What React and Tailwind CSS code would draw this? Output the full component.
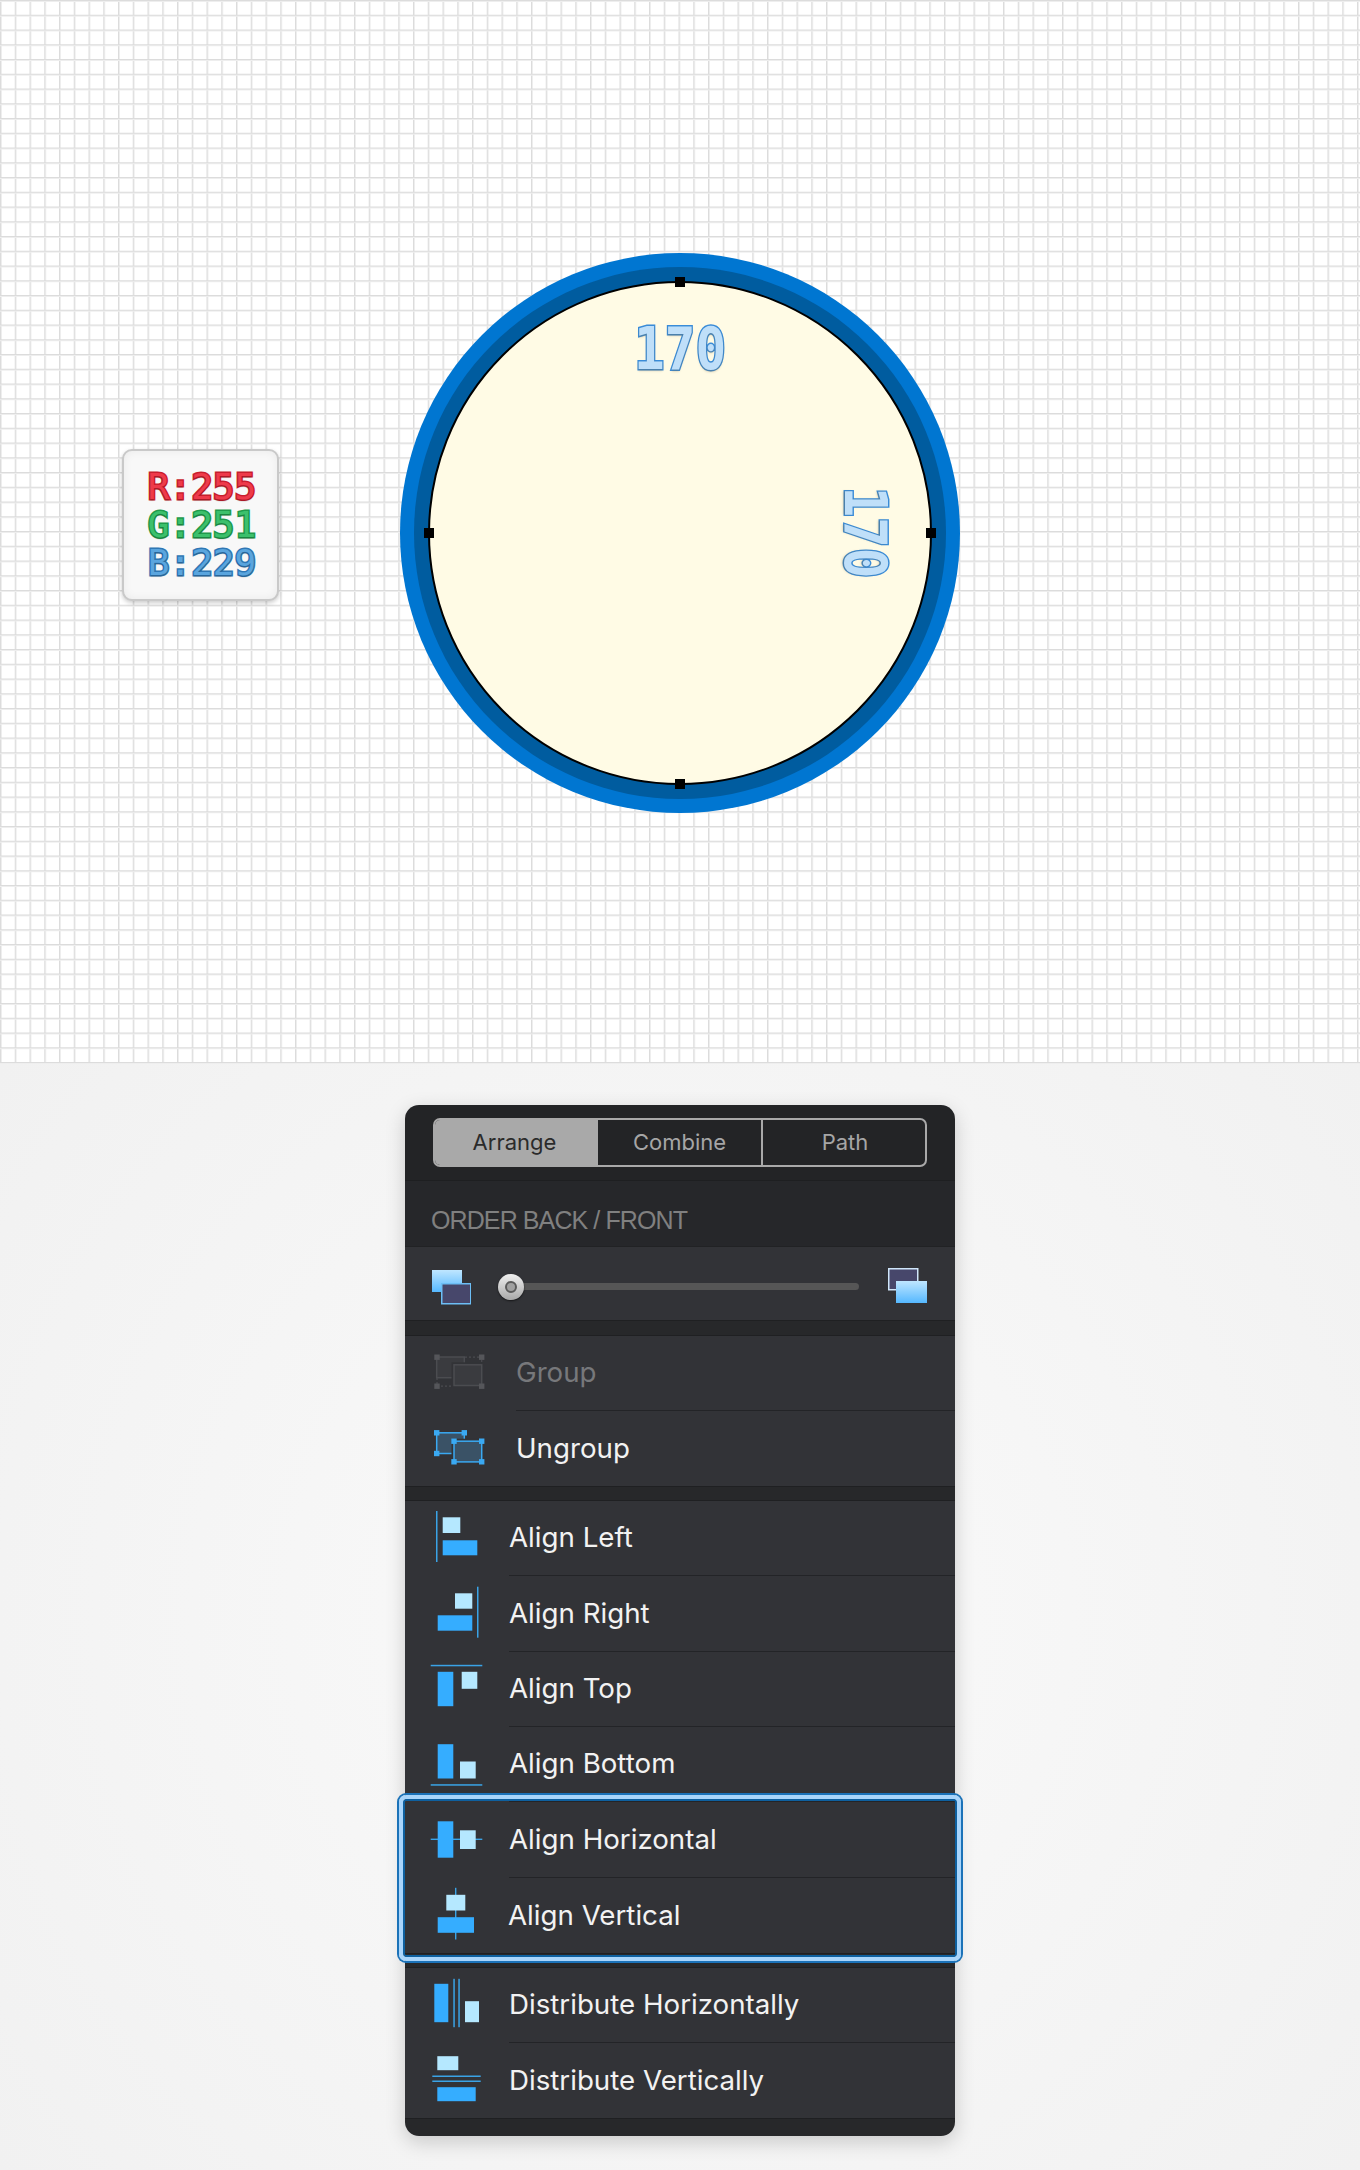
const BLUE = '#35adff';
const LIGHT = '#b5e8ff';
const LINE = '#3aa3e6';

function Icon({ children }) {
    return (
        <svg width="60" height="60" viewBox="0 0 60 60" className="shrink-0 ml-[24px]">
            {children}
        </svg>
    );
}

function Box({ x1, y1, x2, y2, fill }) {
    return <rect x={x1} y={y1} width={x2 - x1} height={y2 - y1} fill={fill} />;
}

function GroupShape({ stroke, fill, handle, dotted }) {
    const squares = dotted
        ? [[8, 13.2], [52.7, 13.2], [8, 42.2], [52.7, 42.2]]
        : [[7.7, 13.8], [35.3, 13.8], [7.7, 34.5], [25, 22.2], [52.7, 22.2], [25, 42.8], [52.7, 42.8]];
    const top = dotted ? 13 : 13.8;
    const lower = dotted ? 20.8 : 22.2;
    return (
        <Icon>
            {dotted && (
                <path d="M36 13.2H50M52.7 16V40M12 42.2H50M8 34V40" stroke={stroke} strokeWidth="1.2" strokeDasharray="2 2" fill="none" />
            )}
            <rect x="7.7" y={top} width="27.6" height="20.7" fill={fill} stroke={stroke} strokeWidth="1.5" />
            <rect x="25" y={lower} width="27.7" height="20.7" fill="none" stroke="#323337" strokeWidth="5" />
            <rect x="25" y={lower} width="27.7" height="20.7" fill={fill} stroke={stroke} strokeWidth="1.5" />
            {squares.map(([x, y]) => (
                <rect key={`${x}-${y}`} x={x - 2.7} y={y - 2.7} width="5.4" height="5.4" fill={handle} />
            ))}
        </Icon>
    );
}

const groupRows = [
    { label: 'Group', muted: true, icon: <GroupShape stroke="#4b4c50" fill="#3a3b3f" handle="#55565a" dotted /> },
    { label: 'Ungroup', icon: <GroupShape stroke="#3aa9f2" fill="#3a5266" handle="#3aa9f2" /> },
];

const alignRows = [
    {
        label: 'Align Left',
        icon: (
            <Icon>
                <Box x1={7} y1={2} x2={8.5} y2={53} fill={LINE} />
                <Box x1={13.7} y1={8.3} x2={31.3} y2={24} fill={LIGHT} />
                <Box x1={13.7} y1={31.3} x2={48.3} y2={46.3} fill={BLUE} />
            </Icon>
        ),
    },
    {
        label: 'Align Right',
        icon: (
            <Icon>
                <Box x1={26} y1={9.3} x2={43.3} y2={24.7} fill={LIGHT} />
                <Box x1={8.7} y1={31.3} x2={43.3} y2={46.7} fill={BLUE} />
                <Box x1={48} y1={2.7} x2={49.5} y2={53.7} fill={LINE} />
            </Icon>
        ),
    },
    {
        label: 'Align Top',
        icon: (
            <Icon>
                <Box x1={1.7} y1={5.8} x2={53.3} y2={7.3} fill={LINE} />
                <Box x1={8.7} y1={12.8} x2={24.3} y2={47.2} fill={BLUE} />
                <Box x1={32.7} y1={12.8} x2={48.3} y2={29.8} fill={LIGHT} />
            </Icon>
        ),
    },
    {
        label: 'Align Bottom',
        icon: (
            <Icon>
                <Box x1={8.7} y1={9.2} x2={24.3} y2={43.5} fill={BLUE} />
                <Box x1={31} y1={26.5} x2={46.7} y2={43.5} fill={LIGHT} />
                <Box x1={1.7} y1={49.2} x2={53.3} y2={50.7} fill={LINE} />
            </Icon>
        ),
    },
];

const centerRows = [
    {
        label: 'Align Horizontal',
        icon: (
            <Icon>
                <Box x1={1.7} y1={28.6} x2={53.3} y2={30} fill={LINE} />
                <Box x1={8.7} y1={11.3} x2={24.3} y2={47.7} fill={BLUE} />
                <Box x1={31} y1={20.3} x2={46.7} y2={39} fill={LIGHT} />
            </Icon>
        ),
    },
    {
        label: 'Align Vertical',
        indent: 'ml-[19px]',
        icon: (
            <Icon>
                <Box x1={26} y1={2.8} x2={27.4} y2={54.5} fill={LINE} />
                <Box x1={17.3} y1={9.8} x2={36.3} y2={25.5} fill={LIGHT} />
                <Box x1={8.7} y1={32.2} x2={45} y2={47.8} fill={BLUE} />
            </Icon>
        ),
    },
];

const distributeRows = [
    {
        label: 'Distribute Horizontally',
        icon: (
            <Icon>
                <Box x1={5.3} y1={8.8} x2={19.3} y2={47.2} fill={BLUE} />
                <Box x1={24.3} y1={3.8} x2={25.8} y2={52.2} fill={LINE} />
                <Box x1={29.3} y1={3.8} x2={30.8} y2={52.2} fill={LINE} />
                <Box x1={36} y1={26.2} x2={50} y2={47.2} fill={LIGHT} />
            </Icon>
        ),
    },
    {
        label: 'Distribute Vertically',
        icon: (
            <Icon>
                <Box x1={8.3} y1={6.2} x2={29.3} y2={20.2} fill={LIGHT} />
                <Box x1={3.3} y1={25.5} x2={51.7} y2={27} fill={LINE} />
                <Box x1={3.3} y1={30.5} x2={51.7} y2={32} fill={LINE} />
                <Box x1={8.3} y1={37.2} x2={46.7} y2={51.2} fill={BLUE} />
            </Icon>
        ),
    },
];

function Row({ row, height, indent = 'ml-[20px]', last }) {
    return (
        <div className={`flex items-center ${height}`}>
            {row.icon}
            <div className={`flex-1 self-stretch flex items-center ${row.indent || indent} ${last ? '' : 'border-b border-[#232427]'}`}>
                <span className={`text-[27.7px] font-['Inter',sans-serif] ${row.muted ? 'text-[#77787b]' : 'text-[#f2f2f2]'}`}>
                    {row.label}
                </span>
            </div>
        </div>
    );
}

function Gap() {
    return <div className="h-[15px] bg-[#27282a] border-y border-[#1f2022]" />;
}

function Handle({ className }) {
    return <div className={`absolute w-[10px] h-[10px] bg-black ${className}`} />;
}

function CanvasArea() {
    const rgbStyle = "text-[36px] leading-[38px] font-['DejaVu_Sans_Mono',monospace] [paint-order:stroke_fill] [text-shadow:0_2px_1px_rgba(0,0,0,0.15)]";
    const sizeStyle = "absolute text-[51px] leading-none font-bold font-['DejaVu_Sans_Mono',monospace] text-[#bfdff9] [-webkit-text-stroke:2.5px_#3a8cd8] [paint-order:stroke_fill] [text-shadow:0_2px_2px_rgba(120,100,60,0.3)]";

    return (
        <div className="relative h-[1064px] overflow-hidden bg-white bg-[linear-gradient(#dcdcdc_1px,#eeeeee_1px,#eeeeee_2px,transparent_2px),linear-gradient(90deg,#dcdcdc_1px,#eeeeee_1px,#eeeeee_2px,transparent_2px)] bg-[size:14.75px_14.75px] bg-[position:0_0]">
            <div className="absolute left-[122px] top-[449px] w-[157px] h-[152px] pl-[3px] flex flex-col items-center justify-center rounded-[10px] bg-[#f8f8f8] border-2 border-[#c9c9c9] shadow-[0_2px_4px_rgba(0,0,0,0.2),inset_0_0_10px_rgba(0,0,0,0.06)]">
                <div className={`${rgbStyle} text-[#ee3a4a] [-webkit-text-stroke:3px_#c81e2e]`}>R:255</div>
                <div className={`${rgbStyle} text-[#3cc06c] [-webkit-text-stroke:3px_#1f9a4c]`}>G:251</div>
                <div className={`${rgbStyle} text-[#5aa5de] [-webkit-text-stroke:3px_#2f77b4]`}>B:229</div>
            </div>

            <div className="absolute left-[400px] top-[252.5px] w-[560px] h-[560px] rounded-full bg-[#0076d1] p-[14px]">
                <div className="w-full h-full rounded-full bg-[#005c9f] p-[14px]">
                    <div className="relative w-full h-full rounded-full bg-[#fffbe5] border-2 border-black">
                        <Handle className="left-1/2 -translate-x-1/2 -top-[6px]" />
                        <Handle className="left-1/2 -translate-x-1/2 -bottom-[6px]" />
                        <Handle className="top-1/2 -translate-y-1/2 -left-[6px]" />
                        <Handle className="top-1/2 -translate-y-1/2 -right-[6px]" />
                    </div>
                </div>
            </div>

            <div className={`${sizeStyle} left-[634px] top-[323px] scale-y-[1.15]`}>170</div>
            <div className={`${sizeStyle} left-[819px] top-[507px] rotate-90 scale-y-[1.15]`}>170</div>
        </div>
    );
}

function LayerIcon({ front }) {
    return (
        <svg width="39" height="37" viewBox="0 0 39 37" className="shrink-0">
            <defs>
                <linearGradient id={front ? 'layerFront' : 'layerBack'} x1="0" y1="0" x2="0" y2="1">
                    <stop offset="0" stopColor="#bfe6ff" />
                    <stop offset="1" stopColor="#55b8ff" />
                </linearGradient>
            </defs>
            {front ? (
                <>
                    <rect x="0.75" y="0.75" width="29" height="21" fill="#47476b" stroke="#cfe6fa" strokeWidth="1.5" />
                    <rect x="8" y="13" width="31" height="22" fill="url(#layerFront)" />
                </>
            ) : (
                <>
                    <rect x="0" y="2" width="30" height="22" fill="url(#layerBack)" />
                    <rect x="9.75" y="15.75" width="29" height="20" fill="#47476b" stroke="#6cbef5" strokeWidth="1.5" />
                </>
            )}
        </svg>
    );
}

function Panel() {
    return (
        <div className="w-[550px] h-[1031px] rounded-[14px] shadow-[0_6px_20px_rgba(0,0,0,0.18)]">
            <div className="h-[76px] px-[28px] pt-[13px] rounded-t-[14px] bg-[#232426] border-b border-[#1e1f21]">
                <div className="flex h-[49px] rounded-[7px] border-2 border-[#a9a9a9] font-['Inter',sans-serif] text-[22px] text-[#a6a6a6] overflow-hidden">
                    <div className="w-[163px] pr-[4px] flex items-center justify-center bg-[#a9a9a9] text-[#2b2b2b]">Arrange</div>
                    <div className="w-[165px] flex items-center justify-center border-r-2 border-[#a9a9a9]">Combine</div>
                    <div className="flex-1 pl-[2px] flex items-center justify-center">Path</div>
                </div>
            </div>

            <div className="h-[66px] pl-[26px] pt-[14px] flex items-center bg-[#26272a] border-b border-[#212224]">
                <span className="text-[25px] tracking-[-0.9px] font-['Liberation_Sans',sans-serif] text-[#808080]">ORDER BACK / FRONT</span>
            </div>

            <div className="h-[73px] pl-[27px] pt-[6px] flex items-center bg-[#323337]">
                <LayerIcon />
                <div className="relative ml-[27px] w-[361px] h-[7px] rounded-full bg-[#565656]">
                    <div className="absolute left-0 top-1/2 -translate-y-1/2 w-[26px] h-[26px] rounded-full flex items-center justify-center bg-[linear-gradient(#f0f0f0,#a8a8a8)] shadow-[0_1px_2px_rgba(0,0,0,0.6)]">
                        <div className="w-[12px] h-[12px] rounded-full bg-[#a0a0a0] border-2 border-[#5a5a5a]" />
                    </div>
                </div>
                <div className="ml-[29px]">
                    <LayerIcon front />
                </div>
            </div>

            <div className="h-[16px] bg-[#27282a] border-y border-[#1f2022]" />

            <div className="bg-[#323337]">
                {groupRows.map((row, i) => (
                    <Row key={row.label} row={row} height="h-[75px]" indent="ml-[27px]" last={i === 1} />
                ))}
            </div>

            <Gap />

            <div className="bg-[#323337]">
                {alignRows.map((row) => (
                    <Row key={row.label} row={row} height="h-[75.33px]" />
                ))}
                <div className="relative">
                    {centerRows.map((row, i) => (
                        <Row key={row.label} row={row} height="h-[75.33px]" last={i === 1} />
                    ))}
                    <div className="absolute -top-[7px] -bottom-[8px] -left-[6px] -right-[6px] rounded-[7px] border-4 border-[#a9d5fb] shadow-[0_0_0_2px_#1b72b8,inset_0_0_0_2px_#0e609f]" />
                </div>
            </div>

            <Gap />

            <div className="bg-[#323337]">
                {distributeRows.map((row, i) => (
                    <Row key={row.label} row={row} height="h-[75px]" last={i === 1} />
                ))}
            </div>

            <div className="h-[18px] rounded-b-[14px] bg-[#27282a] border-t border-[#1f2022]" />
        </div>
    );
}

export default function App() {
    return (
        <div className="w-[1360px] h-[2170px] overflow-hidden">
            <CanvasArea />
            <div className="h-[1106px] flex justify-center pt-[41px] bg-[radial-gradient(circle_at_center,#fafafa,#f1f1f1)]">
                <Panel />
            </div>
        </div>
    );
}
